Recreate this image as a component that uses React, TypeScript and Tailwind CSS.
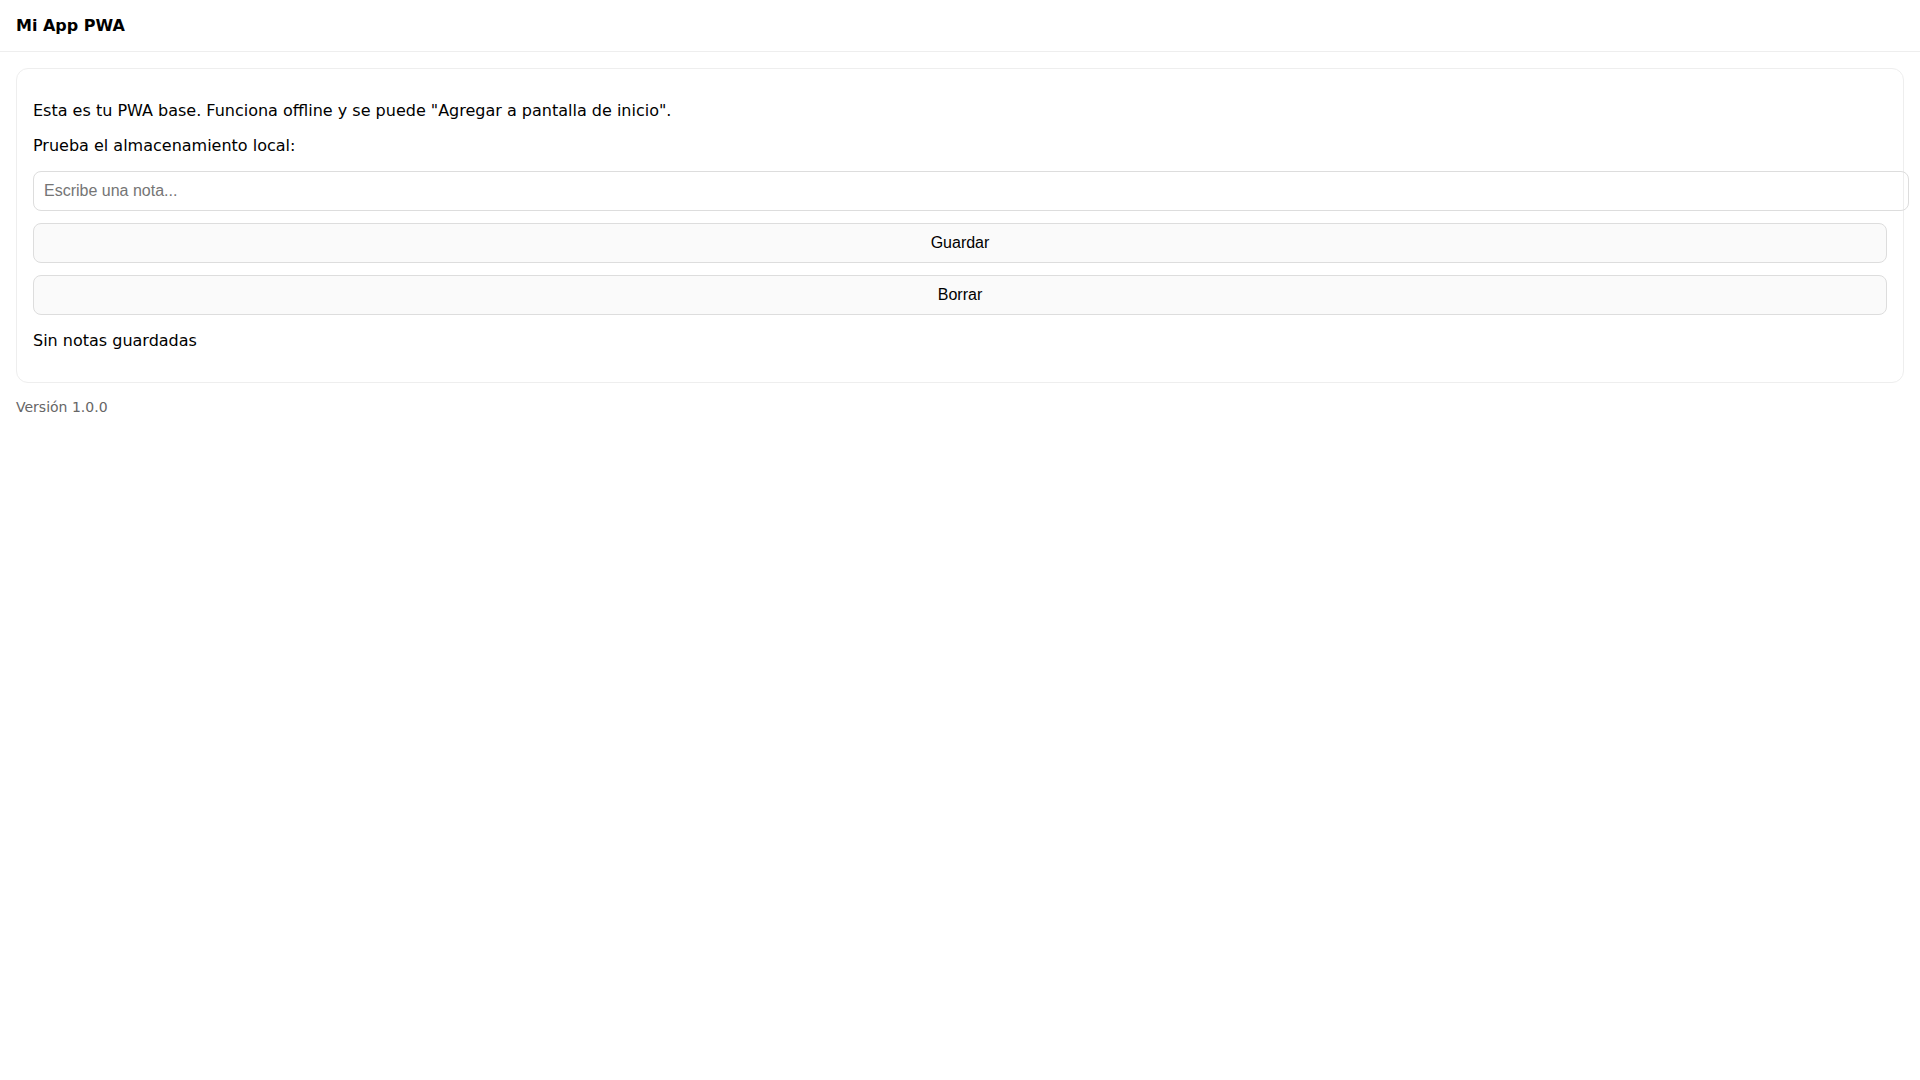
import { useState } from "react";

const App = () => {
  const [note, setNote] = useState("");
  const [saved, setSaved] = useState<string | null>(null);

  return (
    <div className="min-h-screen bg-white text-black font-['DejaVu_Sans',sans-serif] text-base leading-[normal]">
      <header className="px-4 py-4 border-b border-[#eee] font-bold">Mi App PWA</header>

      <main className="p-4">
        <div className="rounded-xl border border-[#eee] p-4">
          <p className="my-4">
            Esta es tu PWA base. Funciona offline y se puede "Agregar a pantalla de inicio".
          </p>
          <p className="my-4">Prueba el almacenamiento local:</p>

          {/* input overflows the card like the original (content-box width: 100%) */}
          <input
            type="text"
            value={note}
            onChange={(e) => setNote(e.target.value)}
            placeholder="Escribe una nota..."
            className="block w-[calc(100%+22px)] p-[10px] border border-[#ddd] rounded-lg font-['Liberation_Sans',Arial,sans-serif] text-base leading-[normal] placeholder:text-[#757575] outline-none"
          />
          <button
            onClick={() => setSaved(note || null)}
            className="block w-full mt-3 p-[10px] border border-[#ddd] rounded-lg bg-[#fafafa] font-['Liberation_Sans',Arial,sans-serif] text-base leading-[normal] text-black"
          >
            Guardar
          </button>
          <button
            onClick={() => {
              setSaved(null);
              setNote("");
            }}
            className="block w-full mt-3 p-[10px] border border-[#ddd] rounded-lg bg-[#fafafa] font-['Liberation_Sans',Arial,sans-serif] text-base leading-[normal] text-black"
          >
            Borrar
          </button>

          <p className="my-4">{saved ? saved : "Sin notas guardadas"}</p>
        </div>
      </main>

      <footer className="px-4 text-[14px] leading-[normal] text-[#666]">Versión 1.0.0</footer>
    </div>
  );
};

export default App;
